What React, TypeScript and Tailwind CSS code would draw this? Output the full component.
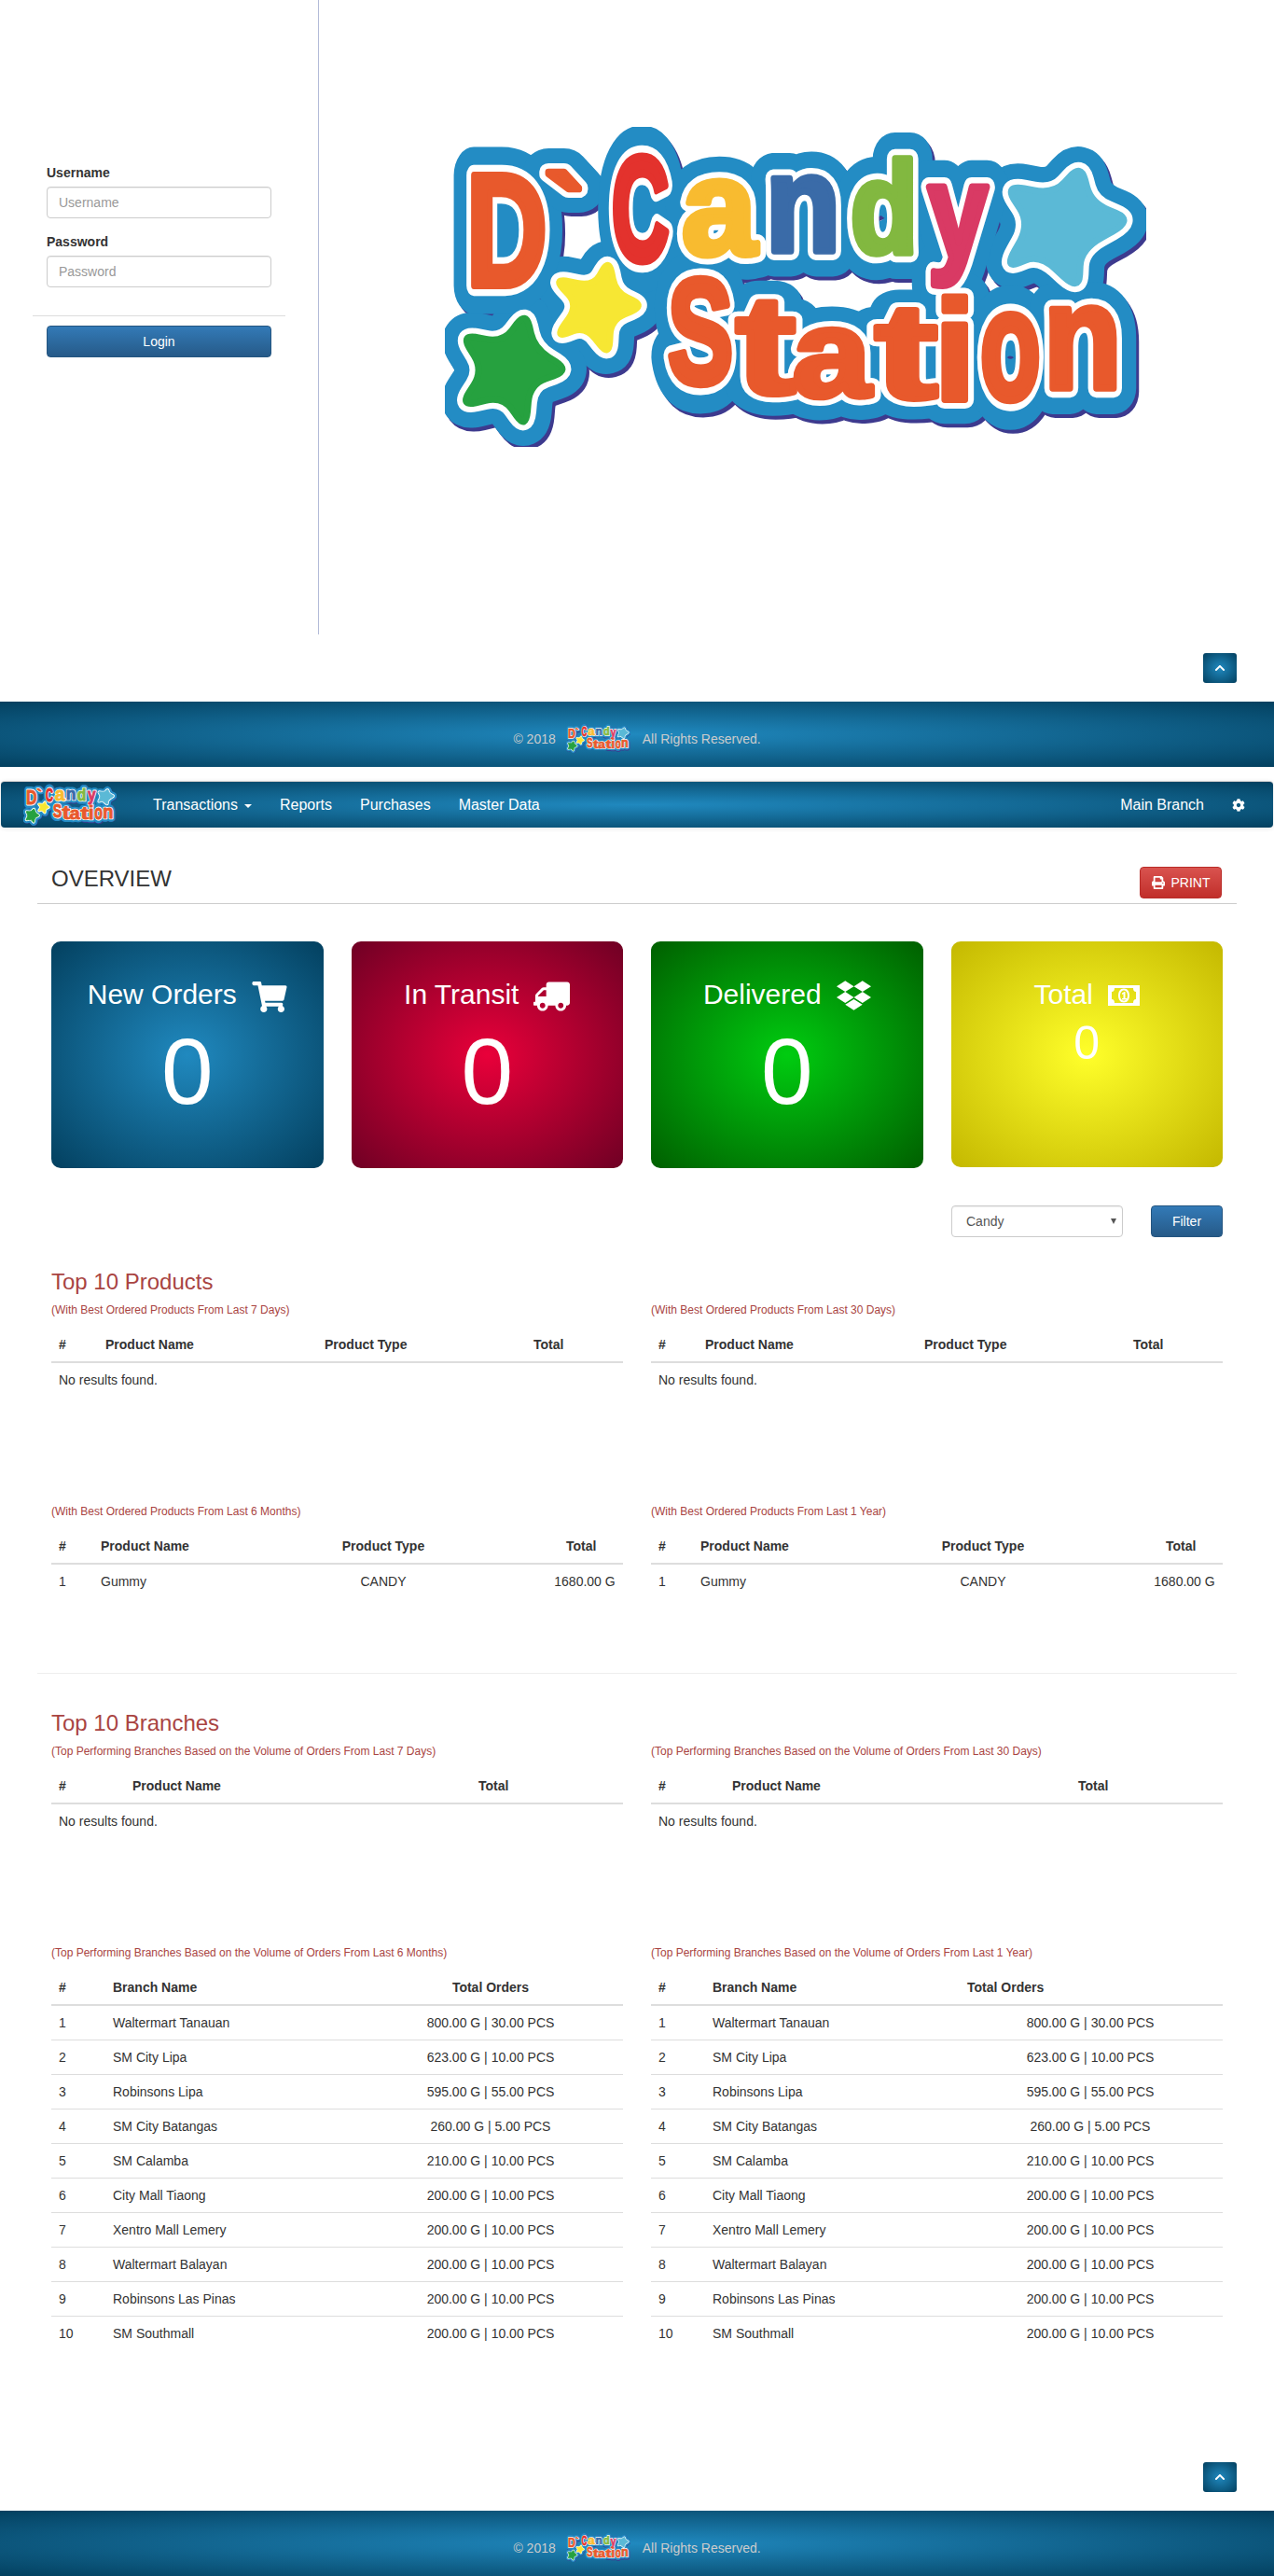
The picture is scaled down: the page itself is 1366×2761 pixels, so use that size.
import React from 'react';
import { FaCog, FaChevronUp, FaDropbox, FaPrint, FaShoppingCart, FaTruck } from 'react-icons/fa';

type Pt = [number, number];

// rounded star outline, corners pulled in a bit
const starPath = (pts: Pt[]) => {
  const t = 0.4;
  const lerp = (a: Pt, b: Pt): string => `${a[0] + (b[0] - a[0]) * t} ${a[1] + (b[1] - a[1]) * t}`;
  return (
    pts
      .map((v, i) => {
        const prev = pts[(i - 1 + pts.length) % pts.length];
        const next = pts[(i + 1) % pts.length];
        return `${i === 0 ? 'M' : 'L'}${lerp(v, prev)} Q${v[0]} ${v[1]} ${lerp(v, next)}`;
      })
      .join(' ') + ' Z'
  );
};

const stars: { color: string; pts: Pt[] }[] = [
  { color: '#5bb9d6', pts: [[682, 40], [693, 81], [738, 100], [682, 131], [680, 176], [638, 137], [600, 152], [627, 104], [600, 62], [653, 72]] },
  { color: '#f7e733', pts: [[176, 142], [183, 177], [214, 192], [178, 207], [176, 246], [151, 214], [118, 226], [143, 191], [116, 162], [159, 171]] },
  { color: '#26a13f', pts: [[87, 198], [96, 237], [134, 261], [91, 276], [87, 324], [62, 289], [16, 300], [41, 261], [17, 222], [62, 231]] },
];

// char, left, baseline, scale x, scale y, colour
const letters: [string, number, number, number, number, string][] = [
  ['D', 23, 170, 1.2, 1.71, '#e8592c'],
  ['`', 107, 137, 1.3, 1.2, '#e8592c'],
  ['C', 179, 142, 0.85, 1.57, '#e3322d'],
  ['a', 254, 137, 1.44, 1.47, '#f8bb30'],
  ['n', 344, 133, 1.31, 1.46, '#3a6ba8'],
  ['d', 435, 135, 1.18, 1.39, '#82b840'],
  ['y', 518, 140, 1.15, 1.43, '#d93a64'],
  ['S', 239, 274, 1.05, 1.6, '#e8592c'],
  ['t', 312, 286, 1.93, 1.5, '#e8592c'],
  ['a', 373, 289, 1.5, 1.33, '#e8592c'],
  ['t', 461, 291, 2.03, 1.44, '#e8592c'],
  ['i', 525, 292, 1.57, 1.53, '#e8592c'],
  ['o', 574, 291, 1.06, 1.67, '#e8592c'],
  ['n', 642, 280, 1.37, 1.59, '#e8592c'],
];

const Logo = ({ id, className }: { id: string; className: string }) => {
  const layer = (st: string | null, sw: number, move = '') => (
    <use href={`#${id}`} transform={move} style={{ ...(st ? { '--st': st } : {}), '--sw': sw } as React.CSSProperties} />
  );
  return (
    <svg viewBox="0 0 752 343" preserveAspectRatio="none" className={className}>
      <defs>
        <g id={id} strokeLinejoin="round" strokeLinecap="round">
          {stars.map((s) => (
            <path key={s.color} d={starPath(s.pts)} fill={s.color} style={{ stroke: `var(--st, ${s.color})`, strokeWidth: 'var(--sw)' }} />
          ))}
          {letters.map(([c, x, y, sx, sy, color], i) => (
            <text
              key={i}
              transform={`translate(${x} ${y}) scale(${sx} ${sy})`}
              fontFamily="'Liberation Sans', Arial, sans-serif"
              fontWeight="700"
              fontSize="100"
              fill={color}
              style={{ stroke: `var(--st, ${color})`, strokeWidth: `calc(var(--sw) / ${(sx + sy) / 2})` }}
            >
              {c}
            </text>
          ))}
        </g>
      </defs>
      {layer('#3d3a8e', 52, 'translate(3 4)')}
      {layer('#238cc4', 52)}
      {layer('#ffffff', 19)}
      {layer(null, 7)}
    </svg>
  );
};

const blueGlow = 'bg-[radial-gradient(ellipse_at_center,#2089bf,#03405f)]';

const BackToTop = () => (
  <div className="flex justify-end pr-[40px]">
    <div className={`flex h-[32px] w-[36px] items-center justify-center rounded-[3px] text-white ${blueGlow}`}>
      <FaChevronUp className="h-[12px] w-[12px]" />
    </div>
  </div>
);

const Footer = ({ id }: { id: string }) => (
  <div className={`flex h-[70px] items-center justify-center pt-[9px] text-[14px] text-[#ccc] ${blueGlow}`}>
    <span>© 2018</span>
    <Logo id={id} className="ml-[11px] mr-[13px] h-[31px] w-[69px]" />
    <span>All Rights Reserved.</span>
  </div>
);

const StatCard = ({
  title,
  icon,
  value,
  glow,
  small,
}: {
  title: string;
  icon: React.ReactNode;
  value: string;
  glow: string;
  small?: boolean;
}) => (
  <div className={`rounded-[10px] pt-[35px] text-center text-white ${small ? 'h-[242px]' : 'h-[243px]'} ${glow}`}>
    <div className="flex h-[43px] items-center justify-center gap-[16px] text-[30px]">
      <span>{title}</span>
      {icon}
    </div>
    {small ? (
      <div className="mt-[6px] text-[50px] leading-[50px]">{value}</div>
    ) : (
      <div className="mt-[11px] text-[100px] leading-[100px]">{value}</div>
    )}
  </div>
);

const MoneyIcon = () => (
  <svg viewBox="0 0 34 22" className="mt-[3px] h-[22px] w-[34px]" fill="#fff">
    <path
      fillRule="evenodd"
      d="M0 0H34V22H0Z M4 7Q7 7 7 3H27Q27 7 30 7V15Q27 15 27 19H7Q7 15 4 15Z"
    />
    <path
      fillRule="evenodd"
      d="M17 3.5C21 3.5 23 7 23 11S21 18.5 17 18.5 11 15 11 11 13 3.5 17 3.5Z M17 5.5C14.5 5.5 13 8 13 11S14.5 16.5 17 16.5 21 14 21 11 19.5 5.5 17 5.5Z"
    />
    <path d="M15 8.5L17.5 7H18.5V14H20V15.5H15V14H16.5V9.3L15 10Z" />
  </svg>
);

type Align = 'left' | 'center';

const DataTable = ({
  cols,
  heads,
  headAlign,
  cellAlign,
  rows,
  headPads,
}: {
  cols: string[];
  heads: string[];
  headAlign: Align[];
  cellAlign?: Align[];
  rows: string[][];
  headPads?: string[];
}) => (
  <table className="w-full table-fixed border-collapse text-[14px] leading-[20px] text-[#333]">
    <colgroup>
      {cols.map((c, i) => (
        <col key={i} className={c} />
      ))}
    </colgroup>
    <thead>
      <tr className="border-b-2 border-[#ddd]">
        {heads.map((h, i) => (
          <th
            key={h}
            className={`p-[8px] font-bold ${headAlign[i] === 'center' ? 'text-center' : 'text-left'} ${headPads ? headPads[i] : ''}`}
          >
            {h}
          </th>
        ))}
      </tr>
    </thead>
    <tbody>
      {rows.length === 0 ? (
        <tr>
          <td colSpan={heads.length} className="p-[8px]">
            No results found.
          </td>
        </tr>
      ) : (
        rows.map((r, ri) => (
          <tr key={ri} className={ri > 0 ? 'border-t border-[#ddd]' : ''}>
            {r.map((c, i) => (
              <td key={i} className={`p-[8px] ${cellAlign && cellAlign[i] === 'center' ? 'text-center' : 'text-left'}`}>
                {c}
              </td>
            ))}
          </tr>
        ))
      )}
    </tbody>
  </table>
);

const Note = ({ children }: { children: React.ReactNode }) => (
  <div className="mb-[11px] h-[16px] text-[12px] leading-[16px] text-[#a94442]">{children}</div>
);

const emptyProductCols = ['w-[50px]', 'w-[235px]', 'w-[224px]', 'w-[104px]'];
const productCols = ['w-[45px]', 'w-[136px]', 'w-[350px]', 'w-[82px]'];
const emptyBranchCols = ['w-[79px]', 'w-[371px]', 'w-[163px]'];
const branchCols = ['w-[58px]', 'w-[271px]', 'w-[284px]'];

const productHeads = ['#', 'Product Name', 'Product Type', 'Total'];
const gummy = [['1', 'Gummy', 'CANDY', '1680.00 G']];
const gummyHeadPads = ['', '', '', 'pl-[21px]'];

const branches = [
  ['1', 'Waltermart Tanauan', '800.00 G | 30.00 PCS'],
  ['2', 'SM City Lipa', '623.00 G | 10.00 PCS'],
  ['3', 'Robinsons Lipa', '595.00 G | 55.00 PCS'],
  ['4', 'SM City Batangas', '260.00 G | 5.00 PCS'],
  ['5', 'SM Calamba', '210.00 G | 10.00 PCS'],
  ['6', 'City Mall Tiaong', '200.00 G | 10.00 PCS'],
  ['7', 'Xentro Mall Lemery', '200.00 G | 10.00 PCS'],
  ['8', 'Waltermart Balayan', '200.00 G | 10.00 PCS'],
  ['9', 'Robinsons Las Pinas', '200.00 G | 10.00 PCS'],
  ['10', 'SM Southmall', '200.00 G | 10.00 PCS'],
];

const btnBlue = 'rounded-[4px] border border-[#245580] bg-[linear-gradient(to_bottom,#337ab7,#265a88)] text-[14px] text-white';

export default function App() {
  return (
    <div className="min-h-[2761px] bg-white font-['Liberation_Sans',Arial,sans-serif] text-[14px] leading-[20px] text-[#333]">
      {/* login */}
      <div className="flex h-[680px]">
        <div className="h-full w-[342px] border-r border-[#b3bbd8] px-[50px] pt-[175px]">
          <label className="mb-[5px] block font-bold">Username</label>
          <input
            placeholder="Username"
            className="mb-[15px] block h-[34px] w-[241px] rounded-[4px] border border-[#ccc] px-[12px] shadow-[inset_0_1px_1px_rgba(0,0,0,0.075)] placeholder:text-[#999]"
          />
          <label className="mb-[5px] block font-bold">Password</label>
          <input
            placeholder="Password"
            className="block h-[34px] w-[241px] rounded-[4px] border border-[#ccc] px-[12px] shadow-[inset_0_1px_1px_rgba(0,0,0,0.075)] placeholder:text-[#999]"
          />
          <div className="-mx-[15px] mt-[30px] mb-[10px] w-[271px] border-t border-[#ddd]" />
          <button className={`block h-[34px] w-[241px] ${btnBlue}`}>Login</button>
        </div>
        <div className="flex-1 pl-[135px] pt-[136px]">
          <Logo id="logo-main" className="h-[343px] w-[752px]" />
        </div>
      </div>
      <div className="pt-[20px] pb-[20px]">
        <BackToTop />
      </div>
      <Footer id="logo-foot-a" />

      {/* navbar */}
      <div
        className={`mx-px mt-[15px] flex h-[50px] items-center rounded-[4px] border-t border-[#ccc] pl-[24px] pr-[30px] text-[16px] text-white shadow-[0_1px_5px_rgba(0,0,0,0.1)] ${blueGlow}`}
      >
        <Logo id="logo-nav" className="h-[45px] w-[100px]" />
        <div className="ml-[39px] flex items-center gap-[30px]">
          <span className="flex items-center">
            Transactions
            <span className="ml-[7px] mt-[2px] h-0 w-0 border-x-[4px] border-t-[4px] border-x-transparent border-t-white" />
          </span>
          <span>Reports</span>
          <span>Purchases</span>
          <span>Master Data</span>
        </div>
        <div className="ml-auto flex items-center gap-[30px]">
          <span>Main Branch</span>
          <FaCog className="h-[14px] w-[14px]" />
        </div>
      </div>

      <div className="mx-[40px]">
        {/* page title */}
        <div className="flex h-[82px] justify-between border-b border-[#ccc] pl-[15px] pr-[16px] pt-[38px]">
          <h1 className="text-[24px] leading-[34px] font-normal">OVERVIEW</h1>
          <button className="mt-[4px] flex h-[34px] w-[88px] items-center justify-center gap-[7px] rounded-[4px] border border-[#b92c28] bg-[linear-gradient(to_bottom,#d9534f,#c12e2a)] text-[14px] text-white">
            <FaPrint className="h-[14px] w-[14px]" />
            PRINT
          </button>
        </div>

        <div className="px-[15px]">
          {/* stat cards */}
          <div className="mt-[40px] grid grid-cols-4 gap-[30px]">
            <StatCard
              title="New Orders"
              value="0"
              glow={blueGlow}
              icon={<FaShoppingCart className="mt-[5px] h-[33px] w-[38px]" />}
            />
            <StatCard
              title="In Transit"
              value="0"
              glow="bg-[radial-gradient(ellipse_at_center,#e9003a,#6f0024)]"
              icon={<FaTruck className="mt-[5px] h-[32px] w-[39px] -scale-x-100" />}
            />
            <StatCard
              title="Delivered"
              value="0"
              glow="bg-[radial-gradient(ellipse_at_center,#00cc10,#005f00)]"
              icon={<FaDropbox className="mt-[3px] h-[36px] w-[37px]" />}
            />
            <StatCard
              title="Total"
              value="0"
              glow="bg-[radial-gradient(ellipse_at_center,#ffff2a,#c4b800)]"
              small
              icon={<MoneyIcon />}
            />
          </div>

          {/* filter */}
          <div className="mt-[40px] flex justify-end gap-[30px]">
            <div className="relative h-[34px] w-[184px]">
              <select className="h-full w-full appearance-none rounded-[4px] border border-[#ccc] bg-white px-[15px] text-[14px] text-[#555] shadow-[inset_0_1px_1px_rgba(0,0,0,0.075)]">
                <option>Candy</option>
              </select>
              <span className="pointer-events-none absolute top-[14px] right-[7px] h-0 w-0 border-x-[3.5px] border-t-[6px] border-x-transparent border-t-[#555]" />
            </div>
            <button className={`h-[34px] w-[77px] ${btnBlue}`}>Filter</button>
          </div>

          {/* top products */}
          <h3 className="mt-[35px] mb-[9px] text-[24px] leading-[26px] text-[#a94442]">Top 10 Products</h3>
          <div className="grid grid-cols-2 gap-x-[30px]">
            <div className="h-[216px]">
              <Note>(With Best Ordered Products From Last 7 Days)</Note>
              <DataTable cols={emptyProductCols} heads={productHeads} headAlign={['left', 'left', 'left', 'left']} rows={[]} />
            </div>
            <div className="h-[216px]">
              <Note>(With Best Ordered Products From Last 30 Days)</Note>
              <DataTable cols={emptyProductCols} heads={productHeads} headAlign={['left', 'left', 'left', 'left']} rows={[]} />
            </div>
            <div className="h-[181px]">
              <Note>(With Best Ordered Products From Last 6 Months)</Note>
              <DataTable
                cols={productCols}
                heads={productHeads}
                headAlign={['left', 'left', 'center', 'left']}
                cellAlign={['left', 'left', 'center', 'center']}
                headPads={gummyHeadPads}
                rows={gummy}
              />
            </div>
            <div className="h-[181px]">
              <Note>(With Best Ordered Products From Last 1 Year)</Note>
              <DataTable
                cols={productCols}
                heads={productHeads}
                headAlign={['left', 'left', 'center', 'left']}
                cellAlign={['left', 'left', 'center', 'center']}
                headPads={gummyHeadPads}
                rows={gummy}
              />
            </div>
          </div>
        </div>

        <div className="border-t border-[#eee]" />

        {/* top branches */}
        <div className="px-[15px]">
          <h3 className="mt-[40px] mb-[9px] text-[24px] leading-[26px] text-[#a94442]">Top 10 Branches</h3>
          <div className="grid grid-cols-2 gap-x-[30px]">
            <div className="h-[216px]">
              <Note>(Top Performing Branches Based on the Volume of Orders From Last 7 Days)</Note>
              <DataTable cols={emptyBranchCols} heads={['#', 'Product Name', 'Total']} headAlign={['left', 'left', 'left']} rows={[]} />
            </div>
            <div className="h-[216px]">
              <Note>(Top Performing Branches Based on the Volume of Orders From Last 30 Days)</Note>
              <DataTable cols={emptyBranchCols} heads={['#', 'Product Name', 'Total']} headAlign={['left', 'left', 'left']} rows={[]} />
            </div>
            <div>
              <Note>(Top Performing Branches Based on the Volume of Orders From Last 6 Months)</Note>
              <DataTable
                cols={branchCols}
                heads={['#', 'Branch Name', 'Total Orders']}
                headAlign={['left', 'left', 'center']}
                cellAlign={['left', 'left', 'center']}
                rows={branches}
              />
            </div>
            <div>
              <Note>(Top Performing Branches Based on the Volume of Orders From Last 1 Year)</Note>
              <DataTable
                cols={branchCols}
                heads={['#', 'Branch Name', 'Total Orders']}
                headAlign={['left', 'left', 'left']}
                cellAlign={['left', 'left', 'center']}
                headPads={['', '', 'pl-[10px]']}
                rows={branches}
              />
            </div>
          </div>
        </div>
      </div>

      <div className="pt-[120px] pb-[20px]">
        <BackToTop />
      </div>
      <Footer id="logo-foot-b" />
    </div>
  );
}
